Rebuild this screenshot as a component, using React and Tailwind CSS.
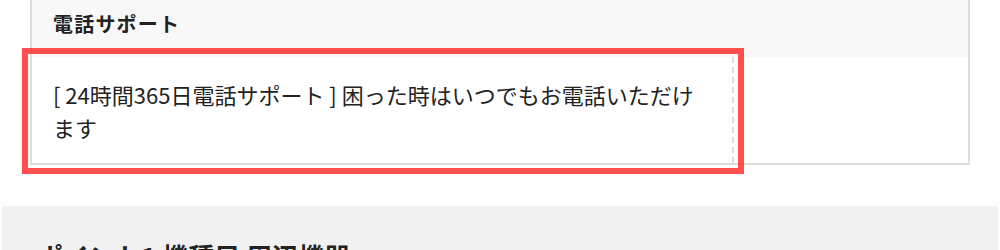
import React from "react";

const FONT = "font-['Noto_Sans_CJK_JP','Noto_Sans',sans-serif]";

export default function App() {
  return (
    <div className={`relative w-[1000px] h-[250px] overflow-hidden bg-white text-[#222] ${FONT}`}>
      {/* spec table */}
      <div className="ml-[30px] mt-[-12px] w-[940px] border-2 border-[#dddddd]">
        <div className="h-[67px] bg-[#f8f8f8] pl-[21px] flex items-center pt-[0px]">
          <span className="text-[20px] font-bold tracking-[0.06em]">電話サポート</span>
        </div>
        <div className="flex h-[106px]">
          <div className="w-[702px] border-r-2 border-dashed border-[#dddddd] pl-[21px] pr-[20px] pt-[21px] text-[22px] leading-[33px]">
            [ 24時間365日電話サポート ] 困った時はいつでもお電話いただけます
          </div>
          <div className="flex-1" />
        </div>
      </div>

      {/* highlight overlay */}
      <div className="absolute left-[22px] top-[48px] w-[722px] h-[126px] border-[6px] border-[rgba(255,30,30,0.78)]" />

      {/* next section */}
      <div className="mt-[41px] mx-[2px] h-[60px] bg-[#f1f1f1] pl-[35px] pt-[37px]">
        <span className="text-[26px] font-bold leading-none">ポイント1 機種目 周辺機器</span>
      </div>
    </div>
  );
}
